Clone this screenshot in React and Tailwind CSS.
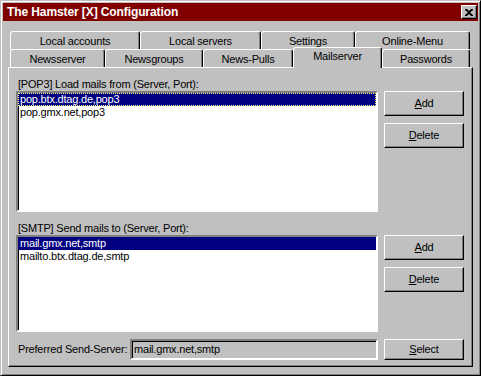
import React from 'react';

const backTabs = [
  { label: 'Local accounts', w: 'w-[130px]' },
  { label: 'Local servers', w: 'w-[121px]' },
  { label: 'Settings', w: 'w-[94px]' },
  { label: 'Online-Menu', w: 'w-[115px]' },
];

const frontTabs = [
  { label: 'Newsserver', w: 'w-[95px]' },
  { label: 'Newsgroups', w: 'w-[98px]' },
  { label: 'News-Pulls', w: 'w-[90px]' },
  { label: 'Mailserver', w: 'w-[89px]', active: true },
  { label: 'Passwords', w: 'w-[88px]' },
];

const Tab = ({ label, w, active }) => (
  <div
    className={`${w} flex justify-center bg-[#c0c0c0] border-t border-l border-r border-t-white border-l-white border-r-black rounded-t-[3px] shadow-[inset_-1px_0_0_#808080] ${
      active ? 'relative z-10 h-[21px] -mb-[1px] pt-[2px]' : 'h-[18px] pt-[3px]'
    }`}
  >
    <span className="leading-[13px]">{label}</span>
  </div>
);

const Button = ({ letter, rest }) => (
  <button className="w-[80px] h-[25px] bg-[#c0c0c0] border border-t-white border-l-white border-r-black border-b-black shadow-[inset_-1px_-1px_0_#808080] text-black leading-[13px]">
    <span className="underline underline-offset-[1px]">{letter}</span>
    {rest}
  </button>
);

const ListBox = ({ items, h, focused }) => (
  <div
    className={`${h} w-[362px] bg-white border-2 border-t-[#808080] border-l-[#808080] border-r-white border-b-white`}
  >
    <div className="h-full shadow-[inset_1px_1px_0_#000]">
      {items.map((item, i) => (
        <div
          key={item}
          className={`h-[13px] leading-[13px] px-[2px] ${
            i === 0
              ? `bg-[#000080] text-white ${focused ? 'outline outline-1 outline-dotted outline-[#ffff80] -outline-offset-1' : ''}`
              : 'text-black'
          }`}
        >
          {item}
        </div>
      ))}
    </div>
  </div>
);

export default function App() {
  return (
    <div
      className="w-[481px] h-[376px] bg-[#c0c0c0] border border-t-[#c0c0c0] border-l-[#c0c0c0] border-r-black border-b-black shadow-[inset_1px_1px_0_#fff,inset_-1px_-1px_0_#808080] p-[2px] text-[11px] tracking-[-0.2px] text-black"
      style={{ fontFamily: '"Liberation Sans", Arial, sans-serif' }}
    >
      {/* title bar */}
      <div className="h-[18px] bg-[#800000] flex items-center justify-between pl-[4px] pr-[1px]">
        <span className="text-white font-bold text-[12px] leading-[14px] tracking-[-0.1px]">The Hamster [X] Configuration</span>
        <div className="w-[16px] h-[14px] bg-[#c0c0c0] border border-t-white border-l-white border-r-black border-b-black shadow-[inset_-1px_-1px_0_#808080] flex items-center justify-center">
          <svg width="8" height="7" viewBox="0 0 8 7">
            <path d="M0 0h2l2 2 2-2h2v1L5 3.5 8 6v1H6L4 5 2 7H0V6l3-2.5L0 1z" fill="#000" />
          </svg>
        </div>
      </div>

      {/* tabs */}
      <div className="mt-[10px] pl-[7px] flex">
        {backTabs.map((t) => (
          <Tab key={t.label} {...t} />
        ))}
      </div>
      <div className="pl-[7px] flex items-end h-[18px]">
        {frontTabs.map((t) => (
          <Tab key={t.label} {...t} />
        ))}
      </div>

      {/* panel */}
      <div className="ml-[5px] w-[465px] h-[300px] border border-t-white border-l-white border-r-black border-b-black shadow-[inset_-1px_-1px_0_#808080] pl-[7px] pt-[10px]">
        <div className="flex gap-[6px]">
          <div className="flex flex-col">
            <div className="h-[13px] leading-[13px] ml-[2px]">[POP3] Load mails from (Server, Port):</div>
            <ListBox items={['pop.btx.dtag.de,pop3', 'pop.gmx.net,pop3']} h="h-[121px]" focused />
          </div>
          <div className="flex flex-col gap-[7px] pt-[13px]">
            <Button letter="A" rest="dd" />
            <Button letter="D" rest="elete" />
          </div>
        </div>

        <div className="flex gap-[6px] mt-[10px]">
          <div className="flex flex-col">
            <div className="h-[13px] leading-[13px] ml-[2px]">[SMTP] Send mails to (Server, Port):</div>
            <ListBox items={['mail.gmx.net,smtp', 'mailto.btx.dtag.de,smtp']} h="h-[97px]" />
          </div>
          <div className="flex flex-col gap-[7px] pt-[13px]">
            <Button letter="A" rest="dd" />
            <Button letter="D" rest="elete" />
          </div>
        </div>

        <div className="flex items-center mt-[7px]">
          <span className="ml-[2px] w-[112px] whitespace-nowrap leading-[13px]">Preferred Send-Server:</span>
          <div className="w-[248px] h-[21px] border-2 border-t-[#808080] border-l-[#808080] border-r-white border-b-white">
            <div className="h-full shadow-[inset_1px_1px_0_#000] pl-[2px] leading-[17px]">mail.gmx.net,smtp</div>
          </div>
          <div className="ml-[6px]">
            <button className="w-[80px] h-[21px] bg-[#c0c0c0] border border-t-white border-l-white border-r-black border-b-black shadow-[inset_-1px_-1px_0_#808080] leading-[13px]">
              <span className="underline underline-offset-[1px]">S</span>elect
            </button>
          </div>
        </div>
      </div>
    </div>
  );
}
